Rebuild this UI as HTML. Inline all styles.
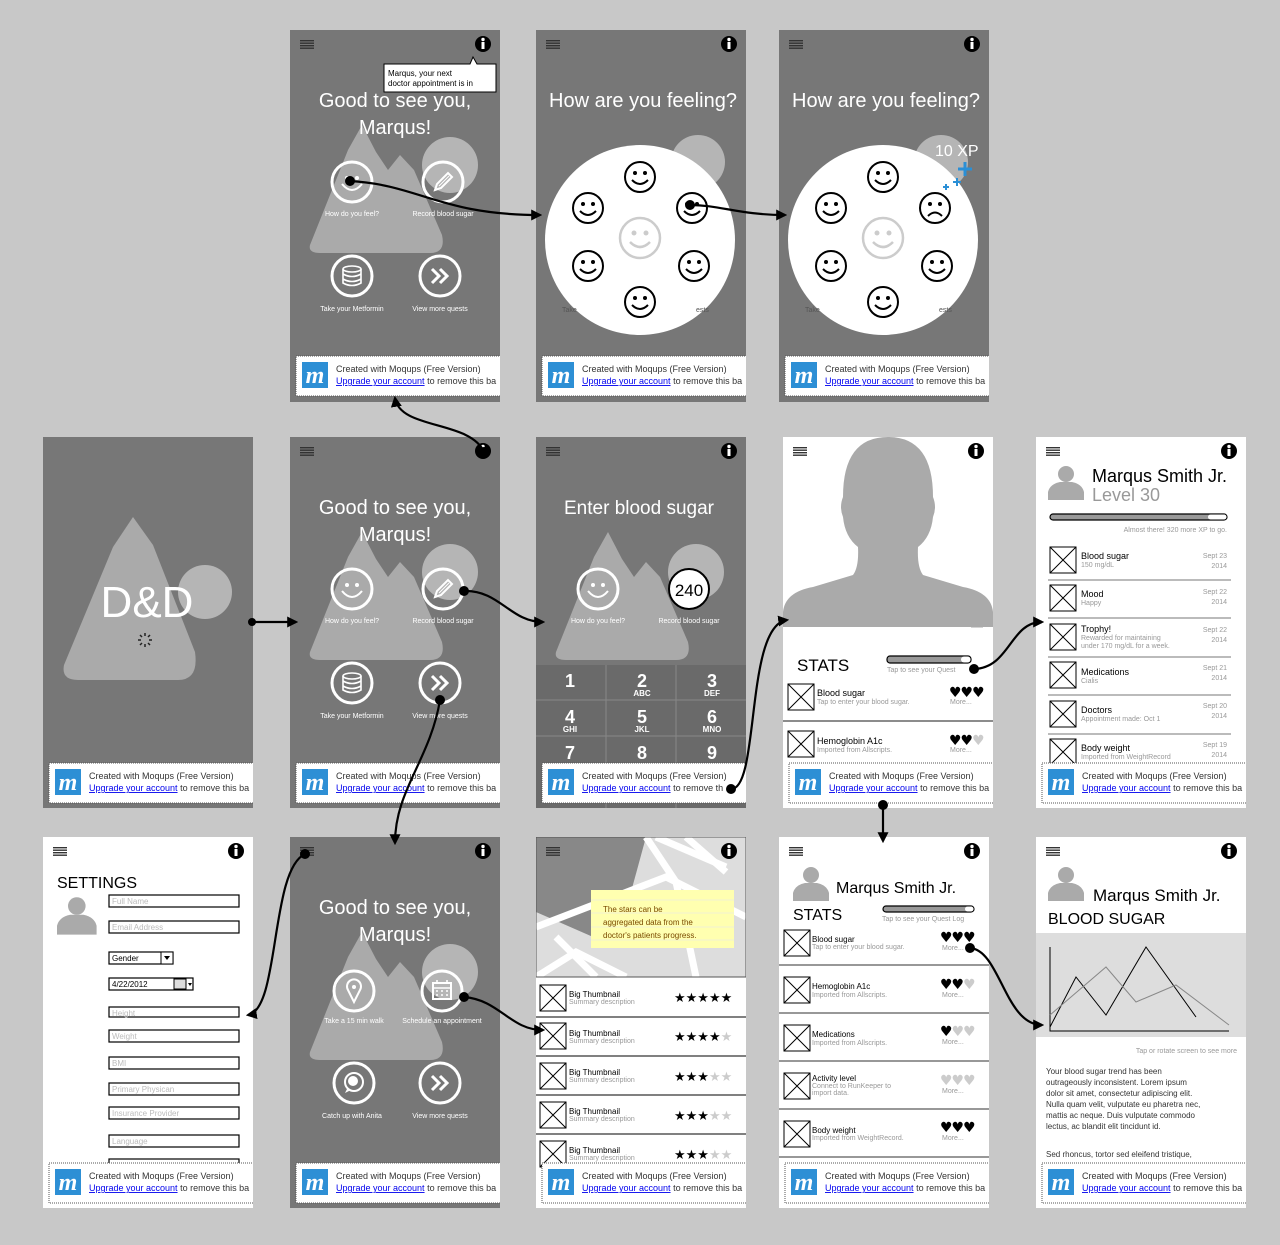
<!DOCTYPE html>
<html><head><meta charset="utf-8"><style>
html,body{margin:0;padding:0;background:#c8c8c8;}
svg{display:block;font-family:"Liberation Sans",sans-serif;}
.w{fill:#fff}.t7{font-size:7px}.t8{font-size:8px}.t9{font-size:9px}
.g{fill:#999}.lk{fill:#00e;text-decoration:underline}
.hr{font-size:14px;font-family:"DejaVu Sans",sans-serif;letter-spacing:-1px}
</style></head><body>
<svg width="1280" height="1245" viewBox="0 0 1280 1245" xmlns="http://www.w3.org/2000/svg">
<defs>
<g id="ham"><rect x="10" y="10" width="14" height="1.4" fill="#333"/><rect x="10" y="12.5" width="14" height="1.4" fill="#333"/><rect x="10" y="15" width="14" height="1.4" fill="#333"/><rect x="10" y="17.5" width="14" height="1.4" fill="#333"/></g>
<g id="info"><circle cx="193" cy="14" r="8" fill="#000"/><rect x="191.5" y="12" width="3" height="7" fill="#fff"/><circle cx="193" cy="9.5" r="1.7" fill="#fff"/></g>
<g id="bar"><rect x="6" y="326" width="220" height="40" fill="#fff" stroke="#555" stroke-dasharray="1,1"/><rect x="12" y="332" width="26" height="26" fill="#2d8fd5"/><text x="25" y="353" fill="#fff" font-family="Liberation Serif,serif" font-style="italic" font-weight="bold" font-size="24" text-anchor="middle">m</text></g>
<g id="mtn"><path d="M20 215 L58 120 L72 95 L86 122 L98 140 L110 125 L124 140 L152 205 Q156 223 140 223 L30 223 Q18 223 20 215Z" fill="#aaa"/></g>
<g id="xb"><rect x="0" y="0" width="26" height="26" fill="#fff" stroke="#000"/><path d="M0 0L26 26M26 0L0 26" stroke="#000"/></g>
<g id="av"><circle cx="18" cy="10" r="8" fill="#aaa"/><path d="M0 36 L0 28 Q2 20 12 18 L24 18 Q34 20 36 28 L36 36Z" fill="#aaa"/></g>
<g id="sm"><circle r="15" fill="none" stroke="#000" stroke-width="2"/><circle cx="-5" cy="-4" r="2"/><circle cx="5" cy="-4" r="2"/><path d="M-8 3 Q0 11 8 3" fill="none" stroke="#000" stroke-width="2"/></g>
<g id="sad"><circle r="15" fill="none" stroke="#000" stroke-width="2"/><circle cx="-5" cy="-4" r="2"/><circle cx="5" cy="-4" r="2"/><path d="M-7 8 Q0 1 7 8" fill="none" stroke="#000" stroke-width="2"/></g>
<g id="bsm"><circle r="20" fill="none" stroke="#ccc" stroke-width="2.5"/><circle cx="-6" cy="-5" r="2.5" fill="#ccc"/><circle cx="6" cy="-5" r="2.5" fill="#ccc"/><path d="M-10 4 Q0 14 10 4" fill="none" stroke="#ccc" stroke-width="2.5"/></g>
<g id="ic"><circle r="20" fill="none" stroke="#fff" stroke-width="3"/></g>
<g id="wsm"><circle cx="-5" cy="-4" r="2" fill="#fff"/><circle cx="5" cy="-4" r="2" fill="#fff"/><path d="M-10 2 Q0 14 10 2" fill="none" stroke="#fff" stroke-width="2"/></g>
<g id="pen"><path d="M-8 8 L-6 2 L5 -9 L9 -5 L-2 6Z" fill="none" stroke="#fff" stroke-width="2"/><path d="M-4 4 L6 -6" stroke="#fff"/></g>
<g id="db"><ellipse cx="0" cy="-7" rx="9" ry="3" fill="none" stroke="#fff" stroke-width="1.6"/><path d="M-9 -7V7 Q0 12 9 7V-7 M-9 -2 Q0 3 9 -2 M-9 3 Q0 8 9 3" fill="none" stroke="#fff" stroke-width="1.6"/></g>
<g id="chev"><path d="M-8 -7 L-1 0 L-8 7 M0 -7 L7 0 L0 7" fill="none" stroke="#fff" stroke-width="3"/></g>
<marker id="ar" viewBox="0 0 10 10" refX="8" refY="5" markerWidth="5" markerHeight="5" orient="auto"><path d="M0 0L10 5L0 10Z"/></marker>
</defs>

<!-- R1A -->
<svg x="290" y="30" width="210" height="372">
<rect width="210" height="372" fill="#777"/>
<circle cx="160" cy="135" r="28" fill="#b5b5b5"/><use href="#mtn"/>
<use href="#ham"/><use href="#info"/>
<text x="105" y="77" class="w" font-size="20" text-anchor="middle">Good to see you,</text>
<text x="105" y="104" class="w" font-size="20" text-anchor="middle">Marqus!</text>
<g transform="translate(62,152)"><use href="#ic"/><use href="#wsm"/></g>
<g transform="translate(153,152)"><use href="#ic"/><use href="#pen"/></g>
<g transform="translate(62,246)"><use href="#ic"/><use href="#db"/></g>
<g transform="translate(150,246)"><use href="#ic"/><use href="#chev"/></g>
<text x="62" y="186" class="w t7" text-anchor="middle">How do you feel?</text>
<text x="153" y="186" class="w t7" text-anchor="middle">Record blood sugar</text>
<text x="62" y="281" class="w t7" text-anchor="middle">Take your Metformin</text>
<text x="150" y="281" class="w t7" text-anchor="middle">View more quests</text>
<path d="M94 34 L180 34 L183 27 L187 34 L206 34 L206 62 L94 62Z" fill="#fff" stroke="#000"/>
<text x="98" y="46" class="t8">Marqus, your next</text><text x="98" y="56" class="t8">doctor appointment is in</text>
<use href="#bar"/><text x="46" y="342" class="t9" fill="#333">Created with Moqups (Free Version)</text><text x="46" y="354" class="t9" fill="#333"><tspan class="lk">Upgrade your account</tspan> to remove this ba</text>
</svg>

<!-- R1B -->
<svg x="536" y="30" width="210" height="372">
<rect width="210" height="372" fill="#777"/><circle cx="162" cy="132" r="27" fill="#b5b5b5"/>
<use href="#ham"/><use href="#info"/>
<text x="107" y="77" class="w" font-size="20" text-anchor="middle">How are you feeling?</text>
<circle cx="104" cy="210" r="95" fill="#fff"/>
<text x="26" y="282" class="t7" fill="#555">Take</text><text x="160" y="282" class="t7" fill="#555">ests</text>
<use href="#sm" transform="translate(104,147)"/><use href="#sm" transform="translate(52,178)"/><use href="#sm" transform="translate(156,178)"/>
<use href="#bsm" transform="translate(104,208)"/><use href="#sm" transform="translate(52,236)"/><use href="#sm" transform="translate(158,236)"/><use href="#sm" transform="translate(104,272)"/>
<use href="#bar"/><text x="46" y="342" class="t9" fill="#333">Created with Moqups (Free Version)</text><text x="46" y="354" class="t9" fill="#333"><tspan class="lk">Upgrade your account</tspan> to remove this ba</text>
</svg>

<!-- R1C -->
<svg x="779" y="30" width="210" height="372">
<rect width="210" height="372" fill="#777"/><circle cx="162" cy="132" r="27" fill="#b5b5b5"/>
<use href="#ham"/><use href="#info"/>
<text x="107" y="77" class="w" font-size="20" text-anchor="middle">How are you feeling?</text>
<circle cx="104" cy="210" r="95" fill="#fff"/>
<text x="156" y="126" class="w" font-size="16">10 XP</text>
<path d="M186 132v14M179 139h14" stroke="#2a8fd6" stroke-width="3"/><path d="M178 148v8M174 152h8M167 154v6M164 157h6" stroke="#2a8fd6" stroke-width="2"/>
<text x="26" y="282" class="t7" fill="#555">Take</text><text x="160" y="282" class="t7" fill="#555">ests</text>
<use href="#sm" transform="translate(104,147)"/><use href="#sm" transform="translate(52,178)"/><use href="#sad" transform="translate(156,178)"/>
<use href="#bsm" transform="translate(104,208)"/><use href="#sm" transform="translate(52,236)"/><use href="#sm" transform="translate(158,236)"/><use href="#sm" transform="translate(104,272)"/>
<use href="#bar"/><text x="46" y="342" class="t9" fill="#333">Created with Moqups (Free Version)</text><text x="46" y="354" class="t9" fill="#333"><tspan class="lk">Upgrade your account</tspan> to remove this ba</text>
</svg>

<!-- R2A -->
<svg x="43" y="437" width="210" height="371">
<rect width="210" height="371" fill="#777"/><circle cx="162" cy="155" r="27" fill="#b5b5b5"/>
<path d="M21 228 L70 110 L90 80 L110 108 L152 215 Q156 243 135 243 L35 243 Q18 243 21 228Z" fill="#aaa"/>
<text x="104" y="180" class="w" font-size="44" text-anchor="middle">D&amp;D</text>
<g stroke="#222" stroke-width="1.5"><path d="M102 196v3M102 207v3M95 203h3M106 203h3M97 198l2 2M105 206l2 2M107 198l-2 2M97 208l2-2"/></g>
<use href="#bar"/><text x="46" y="342" class="t9" fill="#333">Created with Moqups (Free Version)</text><text x="46" y="354" class="t9" fill="#333"><tspan class="lk">Upgrade your account</tspan> to remove this ba</text>
</svg>

<!-- R2B -->
<svg x="290" y="437" width="210" height="371">
<rect width="210" height="371" fill="#777"/>
<circle cx="160" cy="135" r="28" fill="#b5b5b5"/><use href="#mtn"/>
<use href="#ham"/><use href="#info"/>
<text x="105" y="77" class="w" font-size="20" text-anchor="middle">Good to see you,</text>
<text x="105" y="104" class="w" font-size="20" text-anchor="middle">Marqus!</text>
<g transform="translate(62,152)"><use href="#ic"/><use href="#wsm"/></g>
<g transform="translate(153,152)"><use href="#ic"/><use href="#pen"/></g>
<g transform="translate(62,246)"><use href="#ic"/><use href="#db"/></g>
<g transform="translate(150,246)"><use href="#ic"/><use href="#chev"/></g>
<text x="62" y="186" class="w t7" text-anchor="middle">How do you feel?</text>
<text x="153" y="186" class="w t7" text-anchor="middle">Record blood sugar</text>
<text x="62" y="281" class="w t7" text-anchor="middle">Take your Metformin</text>
<text x="150" y="281" class="w t7" text-anchor="middle">View more quests</text>
<use href="#bar"/><text x="46" y="342" class="t9" fill="#333">Created with Moqups (Free Version)</text><text x="46" y="354" class="t9" fill="#333"><tspan class="lk">Upgrade your account</tspan> to remove this ba</text>
</svg>

<!-- R2C -->
<svg x="536" y="437" width="210" height="371">
<rect width="210" height="371" fill="#777"/>
<circle cx="160" cy="135" r="28" fill="#b5b5b5"/><use href="#mtn"/>
<use href="#ham"/><use href="#info"/>
<text x="103" y="77" class="w" font-size="19" text-anchor="middle">Enter blood sugar</text>
<g transform="translate(62,152)"><use href="#ic"/><use href="#wsm"/></g>
<circle cx="153" cy="152" r="20" fill="#fff" stroke="#000" stroke-width="2"/>
<text x="153" y="159" font-size="17" text-anchor="middle">240</text>
<text x="62" y="186" class="w t7" text-anchor="middle">How do you feel?</text>
<text x="153" y="186" class="w t7" text-anchor="middle">Record blood sugar</text>
<rect x="0" y="228" width="210" height="143" fill="#6a6a6a"/>
<path d="M70 228V371M140 228V371M0 263H210M0 299H210" stroke="#888"/>
<g class="w" font-size="18" font-weight="bold" text-anchor="middle">
<text x="34" y="250">1</text><text x="106" y="250">2</text><text x="176" y="250">3</text>
<text x="34" y="286">4</text><text x="106" y="286">5</text><text x="176" y="286">6</text>
<text x="34" y="322">7</text><text x="106" y="322">8</text><text x="176" y="322">9</text></g>
<g class="w t8" font-weight="bold" text-anchor="middle"><text x="106" y="259">ABC</text><text x="176" y="259">DEF</text><text x="34" y="295">GHI</text><text x="106" y="295">JKL</text><text x="176" y="295">MNO</text></g>
<use href="#bar"/><text x="46" y="342" class="t9" fill="#333">Created with Moqups (Free Version)</text><text x="46" y="354" class="t9" fill="#333"><tspan class="lk">Upgrade your account</tspan> to remove th</text>
</svg>

<!-- R2D -->
<svg x="783" y="437" width="210" height="371">
<rect width="210" height="371" fill="#fff"/>
<path d="M0 190 V175 Q2 155 30 150 L70 138 Q76 130 75 110 Q62 100 60 80 Q56 70 60 60 Q60 0 105 0 Q150 0 150 60 Q154 70 150 80 Q148 100 135 110 Q134 130 140 138 L180 150 Q208 155 210 175 V190Z" fill="#aaa"/>
<use href="#ham"/><use href="#info"/>
<text x="14" y="201" class="w" font-size="11">Marqus Smith Jr.</text>
<rect x="188" y="190" width="12" height="10" fill="#fff"/><path d="M188 190h12" stroke="#aaa"/>
<text x="14" y="234" font-size="17">STATS</text>
<rect x="104" y="219" width="84" height="7" rx="3" fill="#999" stroke="#000" stroke-width="1.2"/><rect x="178" y="219.5" width="9.5" height="6" rx="3" fill="#fff"/>
<text x="104" y="235" class="t7 g">Tap to see your Quest</text>
<use href="#xb" transform="translate(5,247)"/>
<text x="34" y="259" class="t9">Blood sugar</text><text x="34" y="267" class="t7 g">Tap to enter your blood sugar.</text>
<text x="166" y="260" class="hr">♥♥♥</text><text x="167" y="267" class="t7 g">More...</text>
<path d="M0 284H210" stroke="#666" stroke-width="1.5"/>
<use href="#xb" transform="translate(5,294)"/>
<text x="34" y="307" class="t9">Hemoglobin A1c</text><text x="34" y="315" class="t7 g">Imported from Allscripts.</text>
<text x="166" y="308" class="hr">♥♥<tspan fill="#ccc">♥</tspan></text><text x="167" y="315" class="t7 g">More...</text>
<use href="#bar"/><text x="46" y="342" class="t9" fill="#333">Created with Moqups (Free Version)</text><text x="46" y="354" class="t9" fill="#333"><tspan class="lk">Upgrade your account</tspan> to remove this ba</text>
</svg>

<!-- R2E -->
<svg x="1036" y="437" width="210" height="371">
<rect width="210" height="371" fill="#fff"/>
<use href="#ham"/><use href="#info"/>
<use href="#av" transform="translate(12,27)"/>
<text x="56" y="45" font-size="18">Marqus Smith Jr.</text>
<text x="56" y="64" font-size="18" fill="#999">Level 30</text>
<rect x="14" y="77" width="177" height="6" rx="3" fill="#999" stroke="#000" stroke-width="1.2"/><rect x="172" y="77.5" width="18.5" height="5" rx="2.5" fill="#fff"/>
<text x="191" y="95" class="t7 g" text-anchor="end">Almost there! 320 more XP to go.</text>
<g class="t9">
<use href="#xb" transform="translate(14,110)"/><text x="45" y="122">Blood sugar</text><text x="45" y="130" class="t7 g">150 mg/dL</text><text x="191" y="121" class="t7 g" text-anchor="end">Sept 23</text><text x="191" y="131" class="t7 g" text-anchor="end">2014</text>
<path d="M12 143H195" stroke="#777"/>
<use href="#xb" transform="translate(14,148)"/><text x="45" y="160">Mood</text><text x="45" y="168" class="t7 g">Happy</text><text x="191" y="157" class="t7 g" text-anchor="end">Sept 22</text><text x="191" y="167" class="t7 g" text-anchor="end">2014</text>
<path d="M12 181H195" stroke="#777"/>
<use href="#xb" transform="translate(14,187)"/><text x="45" y="195">Trophy!</text><text x="45" y="203" class="t7 g">Rewarded for maintaining</text><text x="45" y="211" class="t7 g">under 170 mg/dL for a week.</text><text x="191" y="195" class="t7 g" text-anchor="end">Sept 22</text><text x="191" y="205" class="t7 g" text-anchor="end">2014</text>
<path d="M12 220H195" stroke="#777"/>
<use href="#xb" transform="translate(14,225)"/><text x="45" y="238">Medications</text><text x="45" y="246" class="t7 g">Cialis</text><text x="191" y="233" class="t7 g" text-anchor="end">Sept 21</text><text x="191" y="243" class="t7 g" text-anchor="end">2014</text>
<path d="M12 258H195" stroke="#777"/>
<use href="#xb" transform="translate(14,264)"/><text x="45" y="276">Doctors</text><text x="45" y="284" class="t7 g">Appointment made: Oct 1</text><text x="191" y="271" class="t7 g" text-anchor="end">Sept 20</text><text x="191" y="281" class="t7 g" text-anchor="end">2014</text>
<path d="M12 297H195" stroke="#777"/>
<use href="#xb" transform="translate(14,302)"/><text x="45" y="314">Body weight</text><text x="45" y="322" class="t7 g">Imported from WeightRecord</text><text x="191" y="310" class="t7 g" text-anchor="end">Sept 19</text><text x="191" y="320" class="t7 g" text-anchor="end">2014</text>
</g>
<use href="#bar"/><text x="46" y="342" class="t9" fill="#333">Created with Moqups (Free Version)</text><text x="46" y="354" class="t9" fill="#333"><tspan class="lk">Upgrade your account</tspan> to remove this ba</text>
</svg>

<!-- R3A -->
<svg x="43" y="837" width="210" height="371">
<rect width="210" height="371" fill="#fff"/>
<use href="#ham"/><use href="#info"/>
<text x="14" y="51" font-size="16">SETTINGS</text>
<use href="#av" transform="translate(14,58) scale(1.1)"/>
<g fill="#fff" stroke="#000" stroke-width="1.2">
<rect x="66" y="58" width="130" height="12"/><rect x="66" y="84" width="130" height="12"/>
<rect x="66" y="115" width="64" height="12"/><rect x="66" y="141" width="84" height="12"/>
<rect x="66" y="170" width="130" height="10"/><rect x="66" y="193" width="130" height="12"/><rect x="66" y="220" width="130" height="12"/><rect x="66" y="246" width="130" height="12"/><rect x="66" y="270" width="130" height="12"/><rect x="66" y="298" width="130" height="12"/><rect x="66" y="322" width="130" height="10"/></g>
<g class="t8" fill="#bbb"><text x="69" y="67">Full Name</text><text x="69" y="93">Email Address</text><text x="69" y="179">Height</text><text x="69" y="202">Weight</text><text x="69" y="229">BMI</text><text x="69" y="255">Primary Physican</text><text x="69" y="279">Insurance Provider</text><text x="69" y="307">Language</text></g>
<text x="69" y="124" class="t8">Gender</text><rect x="118" y="115" width="12" height="12" fill="#fff" stroke="#000"/><path d="M121 119h6l-3 4z"/>
<text x="69" y="150" class="t8">4/22/2012</text><rect x="131" y="142" width="12" height="10" fill="#ddd" stroke="#000"/><path d="M145 146h4l-2 3z"/>
<use href="#bar"/><text x="46" y="342" class="t9" fill="#333">Created with Moqups (Free Version)</text><text x="46" y="354" class="t9" fill="#333"><tspan class="lk">Upgrade your account</tspan> to remove this ba</text>
</svg>

<!-- R3B -->
<svg x="290" y="837" width="210" height="371">
<rect width="210" height="371" fill="#777"/>
<circle cx="160" cy="135" r="28" fill="#b5b5b5"/><use href="#mtn"/>
<use href="#ham"/><use href="#info"/>
<text x="105" y="77" class="w" font-size="20" text-anchor="middle">Good to see you,</text>
<text x="105" y="104" class="w" font-size="20" text-anchor="middle">Marqus!</text>
<g transform="translate(64,154)"><use href="#ic"/><path d="M0 11 L-6 -1 A7 7 0 1 1 6 -1Z" fill="none" stroke="#fff" stroke-width="2"/><circle cx="0" cy="-4" r="2" fill="#fff"/></g>
<g transform="translate(152,154)"><use href="#ic"/><rect x="-9" y="-8" width="18" height="16" fill="none" stroke="#fff" stroke-width="2"/><path d="M-9 -3H9M-6 0h2M-1 0h2M4 0h2M-6 4h2M-1 4h2M4 4h2M-5 -11v4M5 -11v4" stroke="#fff" stroke-width="1.6"/></g>
<g transform="translate(64,246)"><use href="#ic"/><circle cx="0" cy="-1" r="9" fill="none" stroke="#fff" stroke-width="2"/><circle cx="-1" cy="-2" r="5" fill="#fff"/><path d="M-7 6 L-9 10 L-3 7" fill="#fff"/></g>
<g transform="translate(150,246)"><use href="#ic"/><use href="#chev"/></g>
<text x="64" y="186" class="w t7" text-anchor="middle">Take a 15 min walk</text>
<text x="152" y="186" class="w t7" text-anchor="middle">Schedule an appointment</text>
<text x="62" y="281" class="w t7" text-anchor="middle">Catch up with Anita</text>
<text x="150" y="281" class="w t7" text-anchor="middle">View more quests</text>
<use href="#bar"/><text x="46" y="342" class="t9" fill="#333">Created with Moqups (Free Version)</text><text x="46" y="354" class="t9" fill="#333"><tspan class="lk">Upgrade your account</tspan> to remove this ba</text>
</svg>

<!-- R3C -->
<svg x="536" y="837" width="210" height="371">
<rect width="210" height="371" fill="#fff"/>
<rect x="0" y="0" width="210" height="140" fill="#ddd"/>
<path d="M0 0 H110 L80 110 L0 75Z" fill="#888"/>
<g stroke="#fff" stroke-width="7" fill="none"><path d="M0 90 L130 40 L210 80"/><path d="M110 0 L140 45 L160 140"/><path d="M0 140 L40 115 L90 140"/><path d="M120 0 L190 30"/><path d="M150 0 L190 35"/><path d="M20 100 L60 140"/></g>
<rect x="0" y="0" width="210" height="140" fill="none" stroke="#555"/>
<use href="#ham"/><use href="#info"/>
<rect x="55" y="53" width="143" height="58" fill="#ffffb0"/>
<path d="M55 63H198M55 76H198M55 90H198M55 103H198" stroke="#eed" stroke-width="0.7"/>
<g class="t8" fill="#7a4a00"><text x="67" y="75">The stars can be</text><text x="67" y="88">aggregated data from the</text><text x="67" y="101">doctor's patients progress.</text></g>
<g class="t8"><use href="#xb" transform="translate(4,148)"/><text x="33" y="160">Big Thumbnail</text><text x="33" y="167" class="t7 g">Summary description</text><text x="138" y="165" font-size="13">★★★★★</text>
<path d="M0 180H210" stroke="#000"/>
<use href="#xb" transform="translate(4,186)"/><text x="33" y="199">Big Thumbnail</text><text x="33" y="206" class="t7 g">Summary description</text><text x="138" y="204" font-size="13">★★★★<tspan fill="#ccc">★</tspan></text>
<path d="M0 219H210" stroke="#000"/>
<use href="#xb" transform="translate(4,226)"/><text x="33" y="238">Big Thumbnail</text><text x="33" y="245" class="t7 g">Summary description</text><text x="138" y="244" font-size="13">★★★<tspan fill="#ccc">★★</tspan></text>
<path d="M0 258H210" stroke="#000"/>
<use href="#xb" transform="translate(4,265)"/><text x="33" y="277">Big Thumbnail</text><text x="33" y="284" class="t7 g">Summary description</text><text x="138" y="283" font-size="13">★★★<tspan fill="#ccc">★★</tspan></text>
<path d="M0 297H210" stroke="#000"/>
<use href="#xb" transform="translate(4,304)"/><text x="33" y="316">Big Thumbnail</text><text x="33" y="323" class="t7 g">Summary description</text><text x="138" y="322" font-size="13">★★★<tspan fill="#ccc">★★</tspan></text></g>
<use href="#bar"/><text x="46" y="342" class="t9" fill="#333">Created with Moqups (Free Version)</text><text x="46" y="354" class="t9" fill="#333"><tspan class="lk">Upgrade your account</tspan> to remove this ba</text>
</svg>

<!-- R3D -->
<svg x="779" y="837" width="210" height="371">
<rect width="210" height="371" fill="#fff"/>
<use href="#ham"/><use href="#info"/>
<use href="#av" transform="translate(14,28)"/>
<text x="57" y="56" font-size="16">Marqus Smith Jr.</text>
<text x="14" y="83" font-size="16">STATS</text>
<rect x="104" y="69" width="91" height="6" rx="3" fill="#999" stroke="#000" stroke-width="1.2"/><rect x="186" y="69.5" width="8.5" height="5" rx="2.5" fill="#fff"/>
<text x="103" y="84" class="t7 g">Tap to see your Quest Log</text>
<use href="#xb" transform="translate(5,93)"/><text x="33" y="105" class="t8">Blood sugar</text><text x="33" y="112" class="t7 g">Tap to enter your blood sugar.</text><text x="161" y="105" class="hr">♥♥♥</text><text x="163" y="113" class="t7 g">More...</text>
<path d="M0 128H210" stroke="#777" stroke-width="1.5"/>
<use href="#xb" transform="translate(5,140)"/><text x="33" y="152" class="t8">Hemoglobin A1c</text><text x="33" y="160" class="t7 g">Imported from Allscripts.</text><text x="161" y="152" class="hr">♥♥<tspan fill="#ccc">♥</tspan></text><text x="163" y="160" class="t7 g">More...</text>
<path d="M0 176H210" stroke="#777" stroke-width="1.5"/>
<use href="#xb" transform="translate(5,188)"/><text x="33" y="200" class="t8">Medications</text><text x="33" y="208" class="t7 g">Imported from Allscripts.</text><text x="161" y="199" class="hr">♥<tspan fill="#ccc">♥♥</tspan></text><text x="163" y="207" class="t7 g">More...</text>
<path d="M0 224H210" stroke="#777" stroke-width="1.5"/>
<use href="#xb" transform="translate(5,236)"/><text x="33" y="244" class="t8">Activity level</text><text x="33" y="251" class="t7 g">Connect to RunKeeper to</text><text x="33" y="258" class="t7 g">import data.</text><text x="161" y="248" class="hr" fill="#ccc">♥♥♥</text><text x="163" y="256" class="t7 g">More...</text>
<path d="M0 272H210" stroke="#777" stroke-width="1.5"/>
<use href="#xb" transform="translate(5,284)"/><text x="33" y="296" class="t8">Body weight</text><text x="33" y="303" class="t7 g">Imported from WeightRecord.</text><text x="161" y="295" class="hr">♥♥♥</text><text x="163" y="303" class="t7 g">More...</text>
<path d="M0 320H210" stroke="#777" stroke-width="1.5"/>
<use href="#bar"/><text x="46" y="342" class="t9" fill="#333">Created with Moqups (Free Version)</text><text x="46" y="354" class="t9" fill="#333"><tspan class="lk">Upgrade your account</tspan> to remove this ba</text>
</svg>

<!-- R3E -->
<svg x="1036" y="837" width="210" height="371">
<rect width="210" height="371" fill="#fff"/>
<use href="#ham"/><use href="#info"/>
<use href="#av" transform="translate(12,28)"/>
<text x="57" y="64" font-size="17">Marqus Smith Jr.</text>
<text x="12" y="87" font-size="16">BLOOD SUGAR</text>
<rect x="0" y="96" width="210" height="104" fill="#ddd"/>
<path d="M14 110V194H193" fill="none" stroke="#000"/>
<path d="M14 190 L40 140 L70 178 L110 110 L160 180" fill="none" stroke="#000"/>
<path d="M14 178 L70 130 L100 165 L140 148 L193 188" fill="none" stroke="#888"/>
<text x="201" y="216" class="t7 g" text-anchor="end">Tap or rotate screen to see more</text>
<g class="t8" fill="#333"><text x="10" y="237">Your blood sugar trend has been</text><text x="10" y="248">outrageously inconsistent. Lorem ipsum</text><text x="10" y="259">dolor sit amet, consectetur adipiscing elit.</text><text x="10" y="270">Nulla quam velit, vulputate eu pharetra nec,</text><text x="10" y="281">mattis ac neque. Duis vulputate commodo</text><text x="10" y="292">lectus, ac blandit elit tincidunt id.</text><text x="10" y="320">Sed rhoncus, tortor sed eleifend tristique,</text></g>
<use href="#bar"/><text x="46" y="342" class="t9" fill="#333">Created with Moqups (Free Version)</text><text x="46" y="354" class="t9" fill="#333"><tspan class="lk">Upgrade your account</tspan> to remove this ba</text>
</svg>

<!-- connectors -->
<g fill="none" stroke="#000" stroke-width="2.2" marker-end="url(#ar)">
<path d="M350 181 C420 185 440 215 540 215"/>
<path d="M690 205 C720 205 740 215 785 215"/>
<path d="M484 452 C470 420 400 430 395 398"/>
<path d="M252 622 L296 622"/>
<path d="M464 591 C500 590 510 622 543 622"/>
<path d="M731 789 C760 790 745 625 787 620"/>
<path d="M974 669 C1010 668 1010 622 1042 622"/>
<path d="M440 700 C430 760 395 790 395 843"/>
<path d="M883 805 L883 841"/>
<path d="M305 854 C270 870 280 1010 248 1015"/>
<path d="M464 997 C500 1000 510 1030 543 1030"/>
<path d="M970 948 C1000 950 1005 1025 1042 1025"/>
</g>
<g><circle cx="350" cy="181" r="5"/><circle cx="690" cy="205" r="5"/><circle cx="484" cy="452" r="5"/><circle cx="252" cy="622" r="4"/><circle cx="464" cy="591" r="5"/><circle cx="731" cy="789" r="5"/><circle cx="974" cy="669" r="5"/><circle cx="440" cy="700" r="5"/><circle cx="883" cy="805" r="5"/><circle cx="305" cy="854" r="5"/><circle cx="464" cy="997" r="5"/><circle cx="970" cy="948" r="5"/></g>
</svg>
</body></html>
